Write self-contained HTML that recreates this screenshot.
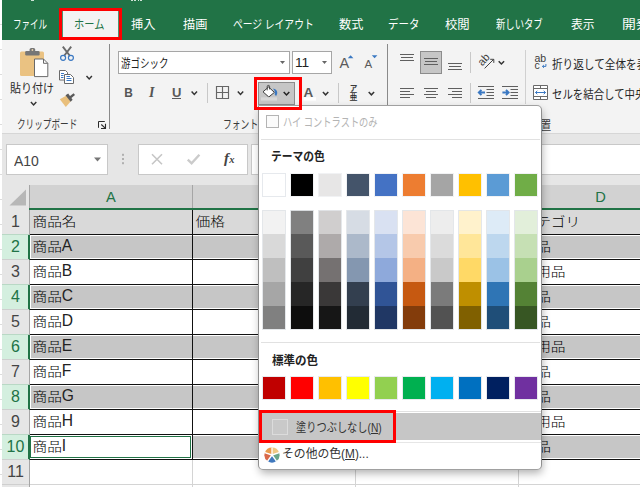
<!DOCTYPE html>
<html lang="ja"><head><meta charset="utf-8"><title>Excel</title>
<style>
html,body{margin:0;padding:0;}
body{width:640px;height:487px;overflow:hidden;position:relative;background:#fff;font-family:"Liberation Sans", "Noto Sans CJK JP", sans-serif;}
.a{position:absolute;}
.t{position:absolute;white-space:nowrap;line-height:20px;height:20px;transform-origin:0 50%;}
u{text-decoration:underline;text-underline-offset:1px;}
.gh{height:20px;line-height:20px;text-align:center;font-size:14.67px;color:#217346}.rh{left:2px;width:27px;height:24px;line-height:24px;text-align:center;font-size:16px;}.ct{height:24px;line-height:24px;font-size:14.67px;color:#000;white-space:nowrap;font-weight:300;margin-top:-0.7px}.k{display:inline-block;transform:translateY(1px) scaleY(.87);transform-origin:0 50%;}.l{font-size:15.6px;color:#222}
</style></head><body>
<div class="a" style="left:0px;top:24px;width:2px;height:1px;background:#dcdcdc;"></div>
<div class="a" style="left:0px;top:49px;width:2px;height:1px;background:#dcdcdc;"></div>
<div class="a" style="left:0px;top:74px;width:2px;height:1px;background:#dcdcdc;"></div>
<div class="a" style="left:0px;top:99px;width:2px;height:1px;background:#dcdcdc;"></div>
<div class="a" style="left:0px;top:124px;width:2px;height:1px;background:#dcdcdc;"></div>
<div class="a" style="left:0px;top:149px;width:2px;height:1px;background:#dcdcdc;"></div>
<div class="a" style="left:0px;top:174px;width:2px;height:1px;background:#dcdcdc;"></div>
<div class="a" style="left:0px;top:199px;width:2px;height:1px;background:#dcdcdc;"></div>
<div class="a" style="left:0px;top:224px;width:2px;height:1px;background:#dcdcdc;"></div>
<div class="a" style="left:0px;top:249px;width:2px;height:1px;background:#dcdcdc;"></div>
<div class="a" style="left:0px;top:274px;width:2px;height:1px;background:#dcdcdc;"></div>
<div class="a" style="left:0px;top:299px;width:2px;height:1px;background:#dcdcdc;"></div>
<div class="a" style="left:0px;top:324px;width:2px;height:1px;background:#dcdcdc;"></div>
<div class="a" style="left:0px;top:349px;width:2px;height:1px;background:#dcdcdc;"></div>
<div class="a" style="left:0px;top:374px;width:2px;height:1px;background:#dcdcdc;"></div>
<div class="a" style="left:0px;top:399px;width:2px;height:1px;background:#dcdcdc;"></div>
<div class="a" style="left:0px;top:424px;width:2px;height:1px;background:#dcdcdc;"></div>
<div class="a" style="left:0px;top:449px;width:2px;height:1px;background:#dcdcdc;"></div>
<div class="a" style="left:0px;top:474px;width:2px;height:1px;background:#dcdcdc;"></div>
<div class="a" style="left:2px;top:0px;width:638px;height:40px;background:#217346;"></div>
<div class="a" style="left:31px;top:0px;width:3px;height:1px;background:#cfe3d7;"></div>
<div class="a" style="left:131px;top:0px;width:2px;height:1px;background:#cfe3d7;"></div>
<div class="a" style="left:134px;top:0px;width:2px;height:1px;background:#cfe3d7;"></div>
<div class="a" style="left:138px;top:0px;width:1px;height:1px;background:#cfe3d7;"></div>
<div class="a" style="left:140px;top:0px;width:2px;height:1px;background:#cfe3d7;"></div>
<div class="a" style="left:2px;top:40px;width:638px;height:93px;background:#f3f3f3;"></div>
<div class="a" style="left:2px;top:133px;width:638px;height:52px;background:#e6e6e6;"></div>
<div class="a" style="left:2px;top:133px;width:638px;height:1px;background:#d6d6d6;"></div>
<div class="a" style="left:59px;top:8px;width:57px;height:26px;background:#f3f3f3;border:3px solid #f00;"></div>
<div class="a" style="left:62px;top:11px;width:1px;height:26px;background:#4f9470;"></div>
<div class="a" style="left:118px;top:11px;width:1px;height:26px;background:#4f9470;"></div>
<svg class="a" style="left:0;top:0" width="640" height="140" viewBox="0 0 640 140" font-family="Liberation Sans, sans-serif"><rect x="109" y="44" width="1" height="85" fill="#8a8a8a"/><rect x="387" y="44" width="1" height="85" fill="#8a8a8a"/><rect x="525" y="50" width="1" height="54" fill="#d0d0d0"/><rect x="207" y="83" width="1" height="20" fill="#c8c8c8"/><rect x="338" y="83" width="1" height="20" fill="#c8c8c8"/><rect x="470" y="52" width="1" height="21" fill="#c8c8c8"/><rect x="470" y="83" width="1" height="20" fill="#c8c8c8"/><rect x="20" y="51.5" width="24" height="24.5" rx="1.5" fill="#eac282"/><rect x="25.2" y="51" width="14.4" height="4.4" rx="1.2" fill="#767676"/><path d="M29.6 52 V49.6 a1.6 1.6 0 0 1 1.6 -1.6 h2.4 a1.6 1.6 0 0 1 1.6 1.6 V52 Z" fill="#767676"/><circle cx="32.4" cy="50" r="0.9" fill="#e8d2ad"/><path d="M34.5 59 H43.5 L47.8 63.3 V76.6 H34.5 Z" fill="#fff" stroke="#6a6a6a" stroke-width="1"/><path d="M43.5 59 V63.3 H47.8" fill="none" stroke="#6a6a6a" stroke-width="1"/><path d="M30.9 102.1 L33.6 104.9 L36.3 102.1" fill="none" stroke="#333" stroke-width="1.5"/><path d="M62.8 46.6 L70 56 M71.2 46.6 L64 56" stroke="#6a6a6a" stroke-width="1.9" fill="none"/><circle cx="63.1" cy="57.8" r="2.5" fill="none" stroke="#3a78c2" stroke-width="1.2"/><circle cx="70.9" cy="57.8" r="2.5" fill="none" stroke="#3a78c2" stroke-width="1.2"/><path d="M59.5 70.5 H65.5 L67.5 72.5 V80 H59.5 Z" fill="#fff" stroke="#6a6a6a" stroke-width="1"/><path d="M64.5 74.5 H70.5 L73.5 77.5 V83.5 H64.5 Z" fill="#fff" stroke="#6a6a6a" stroke-width="1"/><rect x="61" y="73" width="3" height="1" fill="#3a78c2"/><rect x="61" y="75" width="2.5" height="1" fill="#3a78c2"/><rect x="61" y="77" width="2.5" height="1" fill="#3a78c2"/><rect x="66.5" y="78" width="5" height="1" fill="#3a78c2"/><rect x="66.5" y="80" width="5" height="1" fill="#3a78c2"/><rect x="66.5" y="76" width="3.5" height="1" fill="#3a78c2"/><path d="M86.5 76.1 L89.2 78.9 L91.9 76.1" fill="none" stroke="#333" stroke-width="1.5"/><path d="M59.8 99.2 L66.5 95.6 L70.6 101.6 L65.8 107 Z" fill="#e9bf7b"/><path d="M65.5 95.2 L68.2 93.6 L72.6 99.8 L70.6 101.8 Z" fill="#5a5a5a"/><path d="M69.4 96.4 L73.6 93.2 L75 95 L70.8 98.4 Z" fill="#5a5a5a"/><path d="M98.5 127.8 V121.5 H104.8" fill="none" stroke="#2b2b2b" stroke-width="1"/><path d="M101.3 124.5 L105.2 128.2 M105.5 123.8 V128.5 H101" fill="none" stroke="#2b2b2b" stroke-width="1.1"/><rect x="118.5" y="51.5" width="171" height="22" fill="#fff" stroke="#a6a6a6"/><rect x="292.5" y="51.5" width="39" height="22" fill="#fff" stroke="#a6a6a6"/><path d="M280 61 h5 l-2.5 3 z" fill="#666"/><path d="M322 61 h5 l-2.5 3 z" fill="#666"/><text x="339.6" y="67.8" font-size="14.5" fill="#5a5a5a">A</text><path d="M347.8 58.3 h5.6 l-2.8 -3 z" fill="#3a78c2"/><text x="364.6" y="67.8" font-size="11.5" fill="#5a5a5a">A</text><path d="M371.8 55.3 h5.6 l-2.8 3 z" fill="#3a78c2"/><text transform="translate(124.2,97) scale(.88,1)" font-size="13.5" font-weight="bold" fill="#555">B</text><text x="149" y="97" font-size="14" font-style="italic" font-family="Liberation Serif, serif" font-weight="bold" fill="#555">I</text><text x="172" y="96.6" font-size="13" fill="#5a5a5a" font-weight="bold">U</text><rect x="172" y="98" width="9" height="1" fill="#5a5a5a"/><path d="M191.6 91.6 L194.3 94.4 L197 91.6" fill="none" stroke="#333" stroke-width="1.5"/><path d="M216.5 86.5 h12 v12 h-12 z M222.5 86.5 v12 M216.5 92.5 h12" fill="none" stroke="#666" stroke-width="1.15"/><path d="M237.8 91.6 L240.5 94.4 L243.2 91.6" fill="none" stroke="#333" stroke-width="1.5"/><rect x="258.5" y="82.5" width="36" height="22" fill="#c6c6c6" stroke="#8c8c8c"/><path d="M268.6 87 L274.4 92.4 L268.8 97 L263 91.8 Z" fill="#fff" stroke="#3b3b3b" stroke-width="1"/><path d="M267.2 90.4 V86.6 a1.2 1.2 0 0 1 2.4 0 V89.4" fill="none" stroke="#3b3b3b" stroke-width="0.9"/><path d="M272.8 88.8 C275.6 88.8 277.6 90.8 277.2 93.4 L276.4 95.8 C275.2 95.8 274.6 95 274.8 93.8 C275.2 92 274.6 90.2 272.8 88.8 Z" fill="#3a78c2"/><rect x="261" y="97.3" width="16" height="3.3" fill="#d8d8d8"/><path d="M283.7 92.05 L286.5 94.95 L289.3 92.05" fill="none" stroke="#222" stroke-width="1.5"/><text x="303.4" y="96.6" font-size="13.5" font-weight="bold" fill="#5a5a5a">A</text><rect x="303.5" y="97.3" width="12.5" height="3.3" fill="#fff"/><path d="M322.9 92 L325.6 94.8 L328.3 92" fill="none" stroke="#333" stroke-width="1.5"/><text x="349.8" y="90.7" font-size="7.6" fill="#3b3b3b" font-family="Liberation Sans, Noto Sans CJK JP, sans-serif" font-weight="bold">ア</text><text transform="translate(349.6,100.4) scale(.88,1)" font-size="9" fill="#2b2b2b" font-family="Liberation Sans, Noto Sans CJK JP, sans-serif" font-weight="500">亜</text><path d="M368.7 92 L371.4 94.8 L374.1 92" fill="none" stroke="#333" stroke-width="1.5"/><rect x="400" y="54" width="14" height="1" fill="#5f5f5f"/><rect x="401" y="57" width="12" height="1" fill="#5f5f5f"/><rect x="400" y="60" width="14" height="1" fill="#5f5f5f"/><rect x="420.5" y="51.5" width="21" height="22" fill="#c6c6c6" stroke="#8c8c8c"/><rect x="424" y="58" width="14" height="1" fill="#5f5f5f"/><rect x="425" y="61" width="12" height="1" fill="#5f5f5f"/><rect x="424" y="64" width="14" height="1" fill="#5f5f5f"/><rect x="448" y="63" width="14" height="1" fill="#5f5f5f"/><rect x="449" y="66" width="12" height="1" fill="#5f5f5f"/><rect x="448" y="69" width="14" height="1" fill="#5f5f5f"/><rect x="400" y="88" width="14" height="1" fill="#5f5f5f"/><rect x="424" y="88" width="14" height="1" fill="#5f5f5f"/><rect x="448" y="88" width="14" height="1" fill="#5f5f5f"/><rect x="400" y="91" width="10" height="1" fill="#5f5f5f"/><rect x="426" y="91" width="10" height="1" fill="#5f5f5f"/><rect x="452" y="91" width="10" height="1" fill="#5f5f5f"/><rect x="400" y="94" width="14" height="1" fill="#5f5f5f"/><rect x="424" y="94" width="14" height="1" fill="#5f5f5f"/><rect x="448" y="94" width="14" height="1" fill="#5f5f5f"/><rect x="400" y="97" width="10" height="1" fill="#5f5f5f"/><rect x="426" y="97" width="10" height="1" fill="#5f5f5f"/><rect x="452" y="97" width="10" height="1" fill="#5f5f5f"/><text transform="translate(482.2,66.4) rotate(-47)" font-size="11" fill="#3b3b3b">ab</text><path d="M484.6 68.4 L493.6 59.4 M490.2 59.3 H493.8 V62.9" fill="none" stroke="#444" stroke-width="1"/><path d="M498.7 61.2 L501.4 64 L504.1 61.2" fill="none" stroke="#333" stroke-width="1.5"/><rect x="478" y="86" width="16" height="1" fill="#5f5f5f"/><rect x="478" y="98" width="16" height="1" fill="#5f5f5f"/><rect x="486.5" y="89" width="7.5" height="1" fill="#5f5f5f"/><rect x="486.5" y="92" width="7.5" height="1" fill="#5f5f5f"/><rect x="486.5" y="95" width="7.5" height="1" fill="#5f5f5f"/><rect x="502" y="86" width="16" height="1" fill="#5f5f5f"/><rect x="502" y="98" width="16" height="1" fill="#5f5f5f"/><rect x="510.5" y="89" width="7.5" height="1" fill="#5f5f5f"/><rect x="510.5" y="92" width="7.5" height="1" fill="#5f5f5f"/><rect x="510.5" y="95" width="7.5" height="1" fill="#5f5f5f"/><path d="M479.4 92.5 H485 M481.4 89.9 L478.8 92.5 L481.4 95.1" fill="none" stroke="#3a78c2" stroke-width="1.9"/><path d="M502.4 92.5 H508 M506 89.9 L508.6 92.5 L506 95.1" fill="none" stroke="#3a78c2" stroke-width="1.9"/><text x="534.4" y="62" font-size="10.5" fill="#3b3b3b">ab</text><text x="534.4" y="69.4" font-size="10.5" fill="#3b3b3b">c</text><path d="M545.9 64 V66.4 H542.6 M543.9 65 L542.4 66.4 L543.9 67.8" fill="none" stroke="#3a78c2" stroke-width="1"/><path d="M533.5 85.5 h14 v14 h-14 z M533.5 88.5 h14 M533.5 96.5 h14 M540.5 85.5 v3 M540.5 96.5 v3" fill="#fff" stroke="#6a6a6a" stroke-width="1"/><path d="M535.5 92.5 H545.5 M537.3 90.8 L535.5 92.5 L537.3 94.2 M543.7 90.8 L545.5 92.5 L543.7 94.2" fill="none" stroke="#3a78c2" stroke-width="1"/></svg>
<div class="a" style="left:6px;top:144px;width:102px;height:31px;background:#fff;border:1px solid #c8c8c8;box-sizing:border-box;"></div>
<div class="a" style="left:138px;top:144px;width:110px;height:31px;background:#fff;border:1px solid #c8c8c8;box-sizing:border-box;"></div>
<div class="a" style="left:251px;top:144px;width:395px;height:31px;background:#fff;border:1px solid #c8c8c8;box-sizing:border-box;"></div>
<svg class="a" style="left:0;top:140px" width="260" height="40" viewBox="0 140 260 40"><path d="M94 157.5 h7 l-3.5 4 z" fill="#777"/><rect x="122" y="153.8" width="2" height="2" fill="#b0b0b0"/><rect x="122" y="158" width="2" height="2" fill="#b0b0b0"/><rect x="122" y="162.2" width="2" height="2" fill="#b0b0b0"/><path d="M152 154.2 L162 164.2 M162 154.2 L152 164.2" stroke="#c6c6c6" stroke-width="1.6" fill="none"/><path d="M187.8 159.6 L191.6 163.3 L199.4 154.8" stroke="#cbcbcb" stroke-width="2.4" fill="none"/><text x="224" y="162.6" font-family="Liberation Serif, serif" font-style="italic" font-size="15" fill="#444" font-weight="bold">f</text><text x="229.2" y="163.4" font-family="Liberation Serif, serif" font-style="italic" font-size="10.5" fill="#444" font-weight="bold">x</text></svg>
<div class="a" style="left:30px;top:185px;width:610px;height:23px;background:#d2d2d2;"></div>
<div class="a" style="left:192px;top:185px;width:1px;height:23px;background:#a6a6a6;"></div>
<div class="a" style="left:355px;top:185px;width:1px;height:23px;background:#a6a6a6;"></div>
<div class="a" style="left:518px;top:185px;width:1px;height:23px;background:#a6a6a6;"></div>
<div class="a" style="left:2px;top:185px;width:27px;height:25px;background:#e6e6e6;"></div>
<svg class="a" style="left:2px;top:185px" width="28" height="24"><path d="M24 4.5 V20.5 H7.5 Z" fill="#b7b7b7"/></svg>
<div class="a" style="left:29px;top:185px;width:1px;height:23px;background:#a6a6a6;"></div>
<div class="a" style="left:29px;top:208px;width:611px;height:2px;background:#217346;"></div>
<div class="a gh" style="left:91px;top:187px;width:40px;">A</div>
<div class="a gh" style="left:254px;top:187px;width:40px;">B</div>
<div class="a gh" style="left:417px;top:187px;width:40px;">C</div>
<div class="a gh" style="left:580.5px;top:187px;width:40px;">D</div>
<div class="a" style="left:2px;top:210px;width:27px;height:25px;background:#e6e6e6;"></div>
<div class="a" style="left:29px;top:210px;width:1px;height:25px;background:#a6a6a6;"></div>
<div class="a rh" style="top:210px;color:#444">1</div>
<div class="a" style="left:30px;top:210px;width:162px;height:24px;background:#d9d9d9;"></div>
<div class="a ct" style="left:32.5px;top:210px;"><span class="k">商品名</span></div>
<div class="a" style="left:193px;top:210px;width:162px;height:24px;background:#d9d9d9;"></div>
<div class="a ct" style="left:195.5px;top:210px;"><span class="k">価格</span></div>
<div class="a" style="left:356px;top:210px;width:162px;height:24px;background:#d9d9d9;"></div>
<div class="a" style="left:519px;top:210px;width:162px;height:24px;background:#d9d9d9;"></div>
<div class="a ct" style="left:521.5px;top:210px;"><span class="k">カテゴリ</span></div>
<div class="a" style="left:30px;top:234px;width:610px;height:1px;background:#111;"></div>
<div class="a" style="left:2px;top:235px;width:27px;height:25px;background:#d4efdf;"></div>
<div class="a" style="left:28px;top:235px;width:2px;height:25px;background:#217346;"></div>
<div class="a" style="left:2px;top:234px;width:27px;height:1px;background:#b9d8c5;"></div>
<div class="a rh" style="top:235px;color:#217346">2</div>
<div class="a" style="left:30px;top:235px;width:162px;height:24px;background:#fff;"></div>
<div class="a" style="left:31px;top:236px;width:161px;height:22px;background:#c6c6c6;"></div>
<div class="a ct" style="left:32.5px;top:235px;"><span class="k">商品</span><span class="l">A</span></div>
<div class="a" style="left:193px;top:235px;width:162px;height:24px;background:#fff;"></div>
<div class="a" style="left:193px;top:236px;width:162px;height:22px;background:#c6c6c6;"></div>
<div class="a" style="left:356px;top:235px;width:162px;height:24px;background:#fff;"></div>
<div class="a" style="left:356px;top:236px;width:162px;height:22px;background:#c6c6c6;"></div>
<div class="a" style="left:519px;top:235px;width:162px;height:24px;background:#fff;"></div>
<div class="a" style="left:519px;top:236px;width:162px;height:22px;background:#c6c6c6;"></div>
<div class="a ct" style="left:521.5px;top:235px;"><span class="k">食品</span></div>
<div class="a" style="left:30px;top:259px;width:610px;height:1px;background:#111;"></div>
<div class="a" style="left:2px;top:260px;width:27px;height:25px;background:#e6e6e6;"></div>
<div class="a" style="left:29px;top:260px;width:1px;height:25px;background:#a6a6a6;"></div>
<div class="a" style="left:2px;top:259px;width:27px;height:1px;background:#cfcfcf;"></div>
<div class="a rh" style="top:260px;color:#444">3</div>
<div class="a" style="left:30px;top:260px;width:162px;height:24px;background:#fff;"></div>
<div class="a ct" style="left:32.5px;top:260px;"><span class="k">商品</span><span class="l">B</span></div>
<div class="a" style="left:193px;top:260px;width:162px;height:24px;background:#fff;"></div>
<div class="a" style="left:356px;top:260px;width:162px;height:24px;background:#fff;"></div>
<div class="a" style="left:519px;top:260px;width:162px;height:24px;background:#fff;"></div>
<div class="a ct" style="left:521.5px;top:260px;"><span class="k">日用品</span></div>
<div class="a" style="left:30px;top:284px;width:610px;height:1px;background:#111;"></div>
<div class="a" style="left:2px;top:285px;width:27px;height:25px;background:#d4efdf;"></div>
<div class="a" style="left:28px;top:285px;width:2px;height:25px;background:#217346;"></div>
<div class="a" style="left:2px;top:284px;width:27px;height:1px;background:#b9d8c5;"></div>
<div class="a rh" style="top:285px;color:#217346">4</div>
<div class="a" style="left:30px;top:285px;width:162px;height:24px;background:#fff;"></div>
<div class="a" style="left:31px;top:286px;width:161px;height:22px;background:#c6c6c6;"></div>
<div class="a ct" style="left:32.5px;top:285px;"><span class="k">商品</span><span class="l">C</span></div>
<div class="a" style="left:193px;top:285px;width:162px;height:24px;background:#fff;"></div>
<div class="a" style="left:193px;top:286px;width:162px;height:22px;background:#c6c6c6;"></div>
<div class="a" style="left:356px;top:285px;width:162px;height:24px;background:#fff;"></div>
<div class="a" style="left:356px;top:286px;width:162px;height:22px;background:#c6c6c6;"></div>
<div class="a" style="left:519px;top:285px;width:162px;height:24px;background:#fff;"></div>
<div class="a" style="left:519px;top:286px;width:162px;height:22px;background:#c6c6c6;"></div>
<div class="a ct" style="left:521.5px;top:285px;"><span class="k">食品</span></div>
<div class="a" style="left:30px;top:309px;width:610px;height:1px;background:#111;"></div>
<div class="a" style="left:2px;top:310px;width:27px;height:25px;background:#e6e6e6;"></div>
<div class="a" style="left:29px;top:310px;width:1px;height:25px;background:#a6a6a6;"></div>
<div class="a" style="left:2px;top:309px;width:27px;height:1px;background:#cfcfcf;"></div>
<div class="a rh" style="top:310px;color:#444">5</div>
<div class="a" style="left:30px;top:310px;width:162px;height:24px;background:#fff;"></div>
<div class="a ct" style="left:32.5px;top:310px;"><span class="k">商品</span><span class="l">D</span></div>
<div class="a" style="left:193px;top:310px;width:162px;height:24px;background:#fff;"></div>
<div class="a" style="left:356px;top:310px;width:162px;height:24px;background:#fff;"></div>
<div class="a" style="left:519px;top:310px;width:162px;height:24px;background:#fff;"></div>
<div class="a ct" style="left:521.5px;top:310px;"><span class="k">食品</span></div>
<div class="a" style="left:30px;top:334px;width:610px;height:1px;background:#111;"></div>
<div class="a" style="left:2px;top:335px;width:27px;height:25px;background:#d4efdf;"></div>
<div class="a" style="left:28px;top:335px;width:2px;height:25px;background:#217346;"></div>
<div class="a" style="left:2px;top:334px;width:27px;height:1px;background:#b9d8c5;"></div>
<div class="a rh" style="top:335px;color:#217346">6</div>
<div class="a" style="left:30px;top:335px;width:162px;height:24px;background:#fff;"></div>
<div class="a" style="left:31px;top:336px;width:161px;height:22px;background:#c6c6c6;"></div>
<div class="a ct" style="left:32.5px;top:335px;"><span class="k">商品</span><span class="l">E</span></div>
<div class="a" style="left:193px;top:335px;width:162px;height:24px;background:#fff;"></div>
<div class="a" style="left:193px;top:336px;width:162px;height:22px;background:#c6c6c6;"></div>
<div class="a" style="left:356px;top:335px;width:162px;height:24px;background:#fff;"></div>
<div class="a" style="left:356px;top:336px;width:162px;height:22px;background:#c6c6c6;"></div>
<div class="a" style="left:519px;top:335px;width:162px;height:24px;background:#fff;"></div>
<div class="a" style="left:519px;top:336px;width:162px;height:22px;background:#c6c6c6;"></div>
<div class="a ct" style="left:521.5px;top:335px;"><span class="k">日用品</span></div>
<div class="a" style="left:30px;top:359px;width:610px;height:1px;background:#111;"></div>
<div class="a" style="left:2px;top:360px;width:27px;height:25px;background:#e6e6e6;"></div>
<div class="a" style="left:29px;top:360px;width:1px;height:25px;background:#a6a6a6;"></div>
<div class="a" style="left:2px;top:359px;width:27px;height:1px;background:#cfcfcf;"></div>
<div class="a rh" style="top:360px;color:#444">7</div>
<div class="a" style="left:30px;top:360px;width:162px;height:24px;background:#fff;"></div>
<div class="a ct" style="left:32.5px;top:360px;"><span class="k">商品</span><span class="l">F</span></div>
<div class="a" style="left:193px;top:360px;width:162px;height:24px;background:#fff;"></div>
<div class="a" style="left:356px;top:360px;width:162px;height:24px;background:#fff;"></div>
<div class="a" style="left:519px;top:360px;width:162px;height:24px;background:#fff;"></div>
<div class="a ct" style="left:521.5px;top:360px;"><span class="k">食品</span></div>
<div class="a" style="left:30px;top:384px;width:610px;height:1px;background:#111;"></div>
<div class="a" style="left:2px;top:385px;width:27px;height:25px;background:#d4efdf;"></div>
<div class="a" style="left:28px;top:385px;width:2px;height:25px;background:#217346;"></div>
<div class="a" style="left:2px;top:384px;width:27px;height:1px;background:#b9d8c5;"></div>
<div class="a rh" style="top:385px;color:#217346">8</div>
<div class="a" style="left:30px;top:385px;width:162px;height:24px;background:#fff;"></div>
<div class="a" style="left:31px;top:386px;width:161px;height:22px;background:#c6c6c6;"></div>
<div class="a ct" style="left:32.5px;top:385px;"><span class="k">商品</span><span class="l">G</span></div>
<div class="a" style="left:193px;top:385px;width:162px;height:24px;background:#fff;"></div>
<div class="a" style="left:193px;top:386px;width:162px;height:22px;background:#c6c6c6;"></div>
<div class="a" style="left:356px;top:385px;width:162px;height:24px;background:#fff;"></div>
<div class="a" style="left:356px;top:386px;width:162px;height:22px;background:#c6c6c6;"></div>
<div class="a" style="left:519px;top:385px;width:162px;height:24px;background:#fff;"></div>
<div class="a" style="left:519px;top:386px;width:162px;height:22px;background:#c6c6c6;"></div>
<div class="a ct" style="left:521.5px;top:385px;"><span class="k">食品</span></div>
<div class="a" style="left:30px;top:409px;width:610px;height:1px;background:#111;"></div>
<div class="a" style="left:2px;top:410px;width:27px;height:25px;background:#e6e6e6;"></div>
<div class="a" style="left:29px;top:410px;width:1px;height:25px;background:#a6a6a6;"></div>
<div class="a" style="left:2px;top:409px;width:27px;height:1px;background:#cfcfcf;"></div>
<div class="a rh" style="top:410px;color:#444">9</div>
<div class="a" style="left:30px;top:410px;width:162px;height:24px;background:#fff;"></div>
<div class="a ct" style="left:32.5px;top:410px;"><span class="k">商品</span><span class="l">H</span></div>
<div class="a" style="left:193px;top:410px;width:162px;height:24px;background:#fff;"></div>
<div class="a" style="left:356px;top:410px;width:162px;height:24px;background:#fff;"></div>
<div class="a" style="left:519px;top:410px;width:162px;height:24px;background:#fff;"></div>
<div class="a ct" style="left:521.5px;top:410px;"><span class="k">日用品</span></div>
<div class="a" style="left:30px;top:434px;width:610px;height:1px;background:#111;"></div>
<div class="a" style="left:2px;top:435px;width:27px;height:25px;background:#d4efdf;"></div>
<div class="a" style="left:28px;top:435px;width:2px;height:25px;background:#217346;"></div>
<div class="a" style="left:2px;top:434px;width:27px;height:1px;background:#b9d8c5;"></div>
<div class="a rh" style="top:435px;color:#217346">10</div>
<div class="a" style="left:30px;top:435px;width:162px;height:24px;background:#fff;"></div>
<div class="a" style="left:31px;top:436px;width:161px;height:22px;background:#c6c6c6;"></div>
<div class="a ct" style="left:32.5px;top:435px;"><span class="k">商品</span><span class="l">I</span></div>
<div class="a" style="left:193px;top:435px;width:162px;height:24px;background:#fff;"></div>
<div class="a" style="left:193px;top:436px;width:162px;height:22px;background:#c6c6c6;"></div>
<div class="a" style="left:356px;top:435px;width:162px;height:24px;background:#fff;"></div>
<div class="a" style="left:356px;top:436px;width:162px;height:22px;background:#c6c6c6;"></div>
<div class="a" style="left:519px;top:435px;width:162px;height:24px;background:#fff;"></div>
<div class="a" style="left:519px;top:436px;width:162px;height:22px;background:#c6c6c6;"></div>
<div class="a ct" style="left:521.5px;top:435px;"><span class="k">食品</span></div>
<div class="a" style="left:30px;top:459px;width:610px;height:1px;background:#111;"></div>
<div class="a" style="left:192px;top:210px;width:1px;height:250px;background:#111;"></div>
<div class="a" style="left:355px;top:210px;width:1px;height:250px;background:#111;"></div>
<div class="a" style="left:518px;top:210px;width:1px;height:250px;background:#111;"></div>
<div class="a" style="left:30px;top:435px;width:162px;height:24px;background:#fff;"></div>
<div class="a" style="left:30px;top:436px;width:159px;height:20px;background:#fff;border:1px solid #217346;"></div>
<div class="a ct" style="left:32.5px;top:435px;"><span class="k">商品</span><span class="l">I</span></div>
<div class="a" style="left:2px;top:460px;width:27px;height:27px;background:#e6e6e6;"></div>
<div class="a" style="left:29px;top:460px;width:1px;height:27px;background:#a6a6a6;"></div>
<div class="a" style="left:2px;top:459px;width:27px;height:1px;background:#cfcfcf;"></div>
<div class="a" style="left:2px;top:484px;width:27px;height:1px;background:#cfcfcf;"></div>
<div class="a rh" style="top:460px;color:#444">11</div>
<div class="a" style="left:30px;top:484px;width:610px;height:1px;background:#d4d4d4;"></div>
<div class="a" style="left:192px;top:460px;width:1px;height:27px;background:#d4d4d4;"></div>
<div class="a" style="left:355px;top:460px;width:1px;height:27px;background:#d4d4d4;"></div>
<div class="a" style="left:518px;top:460px;width:1px;height:27px;background:#d4d4d4;"></div>
<span class="t" style="left:223.3px;top:114.7px;font-size:12px;color:#3b3b3b;transform:scaleX(0.733);">フォント</span>
<span class="t" style="left:528.6px;top:115.5px;font-size:12px;color:#3b3b3b;transform:scaleX(0.926);">配置</span>
<div class="a" style="left:258px;top:105px;width:282px;height:363px;background:#fff;border:1px solid #a0a0a0;border-left-color:#8f8f8f;border-right-color:#8f8f8f;border-bottom-color:#a0a0a0;border-radius:0 5px 5px 5px;box-shadow:1px 4px 8px -1px rgba(0,0,0,.32);"></div>
<div class="a" style="left:266px;top:115px;width:11px;height:11px;background:#fbfbfb;border:1px solid #b4b4b4;"></div>
<div class="a" style="left:261px;top:139px;width:279px;height:1px;background:#e1e1e1;"></div>
<div class="a" style="left:261px;top:342px;width:279px;height:1px;background:#e1e1e1;"></div>
<div class="a" style="left:259px;top:411px;width:282px;height:1px;background:#e1e1e1;"></div>
<div class="a" style="left:259px;top:442px;width:282px;height:1px;background:#e6e6e6;"></div>
<div class="a" style="left:263px;top:174px;width:22px;height:22px;background:#FFFFFF;outline:1px solid #e6e9ed;"></div>
<div class="a" style="left:263px;top:210px;width:22px;height:24px;background:#F2F2F2;"></div>
<div class="a" style="left:263px;top:234px;width:22px;height:24px;background:#D9D9D9;"></div>
<div class="a" style="left:263px;top:258px;width:22px;height:24px;background:#BFBFBF;"></div>
<div class="a" style="left:263px;top:282px;width:22px;height:24px;background:#A6A6A6;"></div>
<div class="a" style="left:263px;top:306px;width:22px;height:23px;background:#808080;"></div>
<div class="a" style="left:262px;top:209.5px;width:24px;height:120px;background:transparent;border:0;outline:1px solid rgba(225,228,232,.9);outline-offset:-1px;"></div>
<div class="a" style="left:291px;top:174px;width:22px;height:22px;background:#000000;outline:1px solid #f1f2f4;"></div>
<div class="a" style="left:291px;top:210px;width:22px;height:24px;background:#808080;"></div>
<div class="a" style="left:291px;top:234px;width:22px;height:24px;background:#595959;"></div>
<div class="a" style="left:291px;top:258px;width:22px;height:24px;background:#404040;"></div>
<div class="a" style="left:291px;top:282px;width:22px;height:24px;background:#262626;"></div>
<div class="a" style="left:291px;top:306px;width:22px;height:23px;background:#0D0D0D;"></div>
<div class="a" style="left:290px;top:209.5px;width:24px;height:120px;background:transparent;border:0;outline:1px solid rgba(225,228,232,.9);outline-offset:-1px;"></div>
<div class="a" style="left:319px;top:174px;width:22px;height:22px;background:#E7E6E6;outline:1px solid #f1f2f4;"></div>
<div class="a" style="left:319px;top:210px;width:22px;height:24px;background:#D0CECE;"></div>
<div class="a" style="left:319px;top:234px;width:22px;height:24px;background:#AEAAAA;"></div>
<div class="a" style="left:319px;top:258px;width:22px;height:24px;background:#757171;"></div>
<div class="a" style="left:319px;top:282px;width:22px;height:24px;background:#3A3838;"></div>
<div class="a" style="left:319px;top:306px;width:22px;height:23px;background:#161616;"></div>
<div class="a" style="left:318px;top:209.5px;width:24px;height:120px;background:transparent;border:0;outline:1px solid rgba(225,228,232,.9);outline-offset:-1px;"></div>
<div class="a" style="left:347px;top:174px;width:22px;height:22px;background:#44546A;outline:1px solid #f1f2f4;"></div>
<div class="a" style="left:347px;top:210px;width:22px;height:24px;background:#D6DCE4;"></div>
<div class="a" style="left:347px;top:234px;width:22px;height:24px;background:#ACB9CA;"></div>
<div class="a" style="left:347px;top:258px;width:22px;height:24px;background:#8497B0;"></div>
<div class="a" style="left:347px;top:282px;width:22px;height:24px;background:#333F4F;"></div>
<div class="a" style="left:347px;top:306px;width:22px;height:23px;background:#222B35;"></div>
<div class="a" style="left:346px;top:209.5px;width:24px;height:120px;background:transparent;border:0;outline:1px solid rgba(225,228,232,.9);outline-offset:-1px;"></div>
<div class="a" style="left:375px;top:174px;width:22px;height:22px;background:#4472C4;outline:1px solid #f1f2f4;"></div>
<div class="a" style="left:375px;top:210px;width:22px;height:24px;background:#D9E1F2;"></div>
<div class="a" style="left:375px;top:234px;width:22px;height:24px;background:#B4C6E7;"></div>
<div class="a" style="left:375px;top:258px;width:22px;height:24px;background:#8EA9DB;"></div>
<div class="a" style="left:375px;top:282px;width:22px;height:24px;background:#305496;"></div>
<div class="a" style="left:375px;top:306px;width:22px;height:23px;background:#203764;"></div>
<div class="a" style="left:374px;top:209.5px;width:24px;height:120px;background:transparent;border:0;outline:1px solid rgba(225,228,232,.9);outline-offset:-1px;"></div>
<div class="a" style="left:403px;top:174px;width:22px;height:22px;background:#ED7D31;outline:1px solid #f1f2f4;"></div>
<div class="a" style="left:403px;top:210px;width:22px;height:24px;background:#FCE4D6;"></div>
<div class="a" style="left:403px;top:234px;width:22px;height:24px;background:#F8CBAD;"></div>
<div class="a" style="left:403px;top:258px;width:22px;height:24px;background:#F4B084;"></div>
<div class="a" style="left:403px;top:282px;width:22px;height:24px;background:#C65911;"></div>
<div class="a" style="left:403px;top:306px;width:22px;height:23px;background:#833C0B;"></div>
<div class="a" style="left:402px;top:209.5px;width:24px;height:120px;background:transparent;border:0;outline:1px solid rgba(225,228,232,.9);outline-offset:-1px;"></div>
<div class="a" style="left:431px;top:174px;width:22px;height:22px;background:#A5A5A5;outline:1px solid #f1f2f4;"></div>
<div class="a" style="left:431px;top:210px;width:22px;height:24px;background:#EDEDED;"></div>
<div class="a" style="left:431px;top:234px;width:22px;height:24px;background:#DBDBDB;"></div>
<div class="a" style="left:431px;top:258px;width:22px;height:24px;background:#C9C9C9;"></div>
<div class="a" style="left:431px;top:282px;width:22px;height:24px;background:#7B7B7B;"></div>
<div class="a" style="left:431px;top:306px;width:22px;height:23px;background:#525252;"></div>
<div class="a" style="left:430px;top:209.5px;width:24px;height:120px;background:transparent;border:0;outline:1px solid rgba(225,228,232,.9);outline-offset:-1px;"></div>
<div class="a" style="left:459px;top:174px;width:22px;height:22px;background:#FFC000;outline:1px solid #f1f2f4;"></div>
<div class="a" style="left:459px;top:210px;width:22px;height:24px;background:#FFF2CC;"></div>
<div class="a" style="left:459px;top:234px;width:22px;height:24px;background:#FFE699;"></div>
<div class="a" style="left:459px;top:258px;width:22px;height:24px;background:#FFD966;"></div>
<div class="a" style="left:459px;top:282px;width:22px;height:24px;background:#BF8F00;"></div>
<div class="a" style="left:459px;top:306px;width:22px;height:23px;background:#806000;"></div>
<div class="a" style="left:458px;top:209.5px;width:24px;height:120px;background:transparent;border:0;outline:1px solid rgba(225,228,232,.9);outline-offset:-1px;"></div>
<div class="a" style="left:487px;top:174px;width:22px;height:22px;background:#5B9BD5;outline:1px solid #f1f2f4;"></div>
<div class="a" style="left:487px;top:210px;width:22px;height:24px;background:#DDEBF7;"></div>
<div class="a" style="left:487px;top:234px;width:22px;height:24px;background:#BDD7EE;"></div>
<div class="a" style="left:487px;top:258px;width:22px;height:24px;background:#9BC2E6;"></div>
<div class="a" style="left:487px;top:282px;width:22px;height:24px;background:#2F75B5;"></div>
<div class="a" style="left:487px;top:306px;width:22px;height:23px;background:#1F4E78;"></div>
<div class="a" style="left:486px;top:209.5px;width:24px;height:120px;background:transparent;border:0;outline:1px solid rgba(225,228,232,.9);outline-offset:-1px;"></div>
<div class="a" style="left:515px;top:174px;width:22px;height:22px;background:#70AD47;outline:1px solid #f1f2f4;"></div>
<div class="a" style="left:515px;top:210px;width:22px;height:24px;background:#E2EFDA;"></div>
<div class="a" style="left:515px;top:234px;width:22px;height:24px;background:#C6E0B4;"></div>
<div class="a" style="left:515px;top:258px;width:22px;height:24px;background:#A9D08E;"></div>
<div class="a" style="left:515px;top:282px;width:22px;height:24px;background:#548235;"></div>
<div class="a" style="left:515px;top:306px;width:22px;height:23px;background:#375623;"></div>
<div class="a" style="left:514px;top:209.5px;width:24px;height:120px;background:transparent;border:0;outline:1px solid rgba(225,228,232,.9);outline-offset:-1px;"></div>
<div class="a" style="left:263px;top:377px;width:22px;height:22px;background:#C00000;outline:1px solid #e8eaee;"></div>
<div class="a" style="left:291px;top:377px;width:22px;height:22px;background:#FF0000;outline:1px solid #e8eaee;"></div>
<div class="a" style="left:319px;top:377px;width:22px;height:22px;background:#FFC000;outline:1px solid #e8eaee;"></div>
<div class="a" style="left:347px;top:377px;width:22px;height:22px;background:#FFFF00;outline:1px solid #e8eaee;"></div>
<div class="a" style="left:375px;top:377px;width:22px;height:22px;background:#92D050;outline:1px solid #e8eaee;"></div>
<div class="a" style="left:403px;top:377px;width:22px;height:22px;background:#00B050;outline:1px solid #e8eaee;"></div>
<div class="a" style="left:431px;top:377px;width:22px;height:22px;background:#00B0F0;outline:1px solid #e8eaee;"></div>
<div class="a" style="left:459px;top:377px;width:22px;height:22px;background:#0070C0;outline:1px solid #e8eaee;"></div>
<div class="a" style="left:487px;top:377px;width:22px;height:22px;background:#002060;outline:1px solid #e8eaee;"></div>
<div class="a" style="left:515px;top:377px;width:22px;height:22px;background:#7030A0;outline:1px solid #e8eaee;"></div>
<div class="a" style="left:259px;top:413px;width:281.5px;height:27px;background:#c6c6c6;"></div>
<div class="a" style="left:272px;top:419px;width:14px;height:14px;background:#c9c9c9;border:1px solid #dcdcdc;"></div>
<div class="a" style="left:259px;top:410px;width:131px;height:27px;border:3px solid #f00;"></div>
<svg class="a" style="left:263.6px;top:447.4px" width="16" height="16" viewBox="0 0 17 17"><path d="M8.5 8.5 L8.5 0.5 A8 8 0 0 1 16.1 6 Z" fill="#efc883"/><path d="M8.5 8.5 L16.1 6 A8 8 0 0 1 13.2 15 Z" fill="#6aa589"/><path d="M8.5 8.5 L13.2 15 A8 8 0 0 1 3.8 15 Z" fill="#3f78bd"/><path d="M8.5 8.5 L3.8 15 A8 8 0 0 1 0.9 6 Z" fill="#d9694a"/><path d="M8.5 8.5 L0.9 6 A8 8 0 0 1 8.5 0.5 Z" fill="#ea9b4c"/><path d="M8.5 8.5 L8.5 0.5 M8.5 8.5 L16.1 6 M8.5 8.5 L13.2 15 M8.5 8.5 L3.8 15 M8.5 8.5 L0.9 6" stroke="#fff" stroke-width="1.4"/><circle cx="8.5" cy="8.5" r="1" fill="#fff"/></svg>
<div class="a" style="left:254px;top:77px;width:42px;height:26.5px;border:3px solid #f00;"></div>
<span class="t" style="left:13.3px;top:14.6px;font-size:12px;color:#fff;transform:scaleX(0.711);">ファイル</span>
<span class="t" style="left:131.4px;top:15.1px;font-size:12px;color:#fff;transform:scaleX(1.017);">挿入</span>
<span class="t" style="left:183.0px;top:15.1px;font-size:12px;color:#fff;transform:scaleX(1.017);">描画</span>
<span class="t" style="left:233.0px;top:15.1px;font-size:12px;color:#fff;transform:scaleX(0.814);">ページ レイアウト</span>
<span class="t" style="left:338.7px;top:15.1px;font-size:12px;color:#fff;transform:scaleX(1.013);">数式</span>
<span class="t" style="left:388.1px;top:15.1px;font-size:12px;color:#fff;transform:scaleX(0.871);">データ</span>
<span class="t" style="left:445.0px;top:15.1px;font-size:12px;color:#fff;transform:scaleX(1.026);">校閲</span>
<span class="t" style="left:495.9px;top:15.1px;font-size:12px;color:#fff;transform:scaleX(0.778);">新しいタブ</span>
<span class="t" style="left:571.0px;top:15.1px;font-size:12px;color:#fff;transform:scaleX(0.983);">表示</span>
<span class="t" style="left:621.6px;top:15.1px;font-size:12px;color:#fff;transform:scaleX(1.150);">開発</span>
<span class="t" style="left:74.1px;top:14.6px;font-size:12px;color:#217346;transform:scaleX(0.853);">ホーム</span>
<span class="t" style="left:9.8px;top:79.3px;font-size:12px;color:#2b2b2b;transform:scaleX(0.920);">貼り付け</span>
<span class="t" style="left:16.8px;top:115.2px;font-size:12px;color:#3b3b3b;transform:scaleX(0.718);">クリップボード</span>
<span class="t" style="left:120.7px;top:53.5px;font-size:12px;color:#222;transform:scaleX(0.793);">游ゴシック</span>
<span class="t" style="left:294.5px;top:53.0px;font-size:12px;color:#222;transform:scaleX(1.145);">11</span>
<span class="t" style="left:551.8px;top:54.7px;font-size:12px;color:#262626;transform:scaleX(0.885);">折り返して全体を表示する</span>
<span class="t" style="left:551.5px;top:85.3px;font-size:12px;color:#262626;transform:scaleX(0.868);">セルを結合して中央揃え</span>
<span class="t" style="left:283.2px;top:113.2px;font-size:12px;color:#b4b4b4;transform:scaleX(0.770);">ハイ コントラストのみ</span>
<span class="t" style="left:270.8px;top:147.3px;font-size:12px;color:#222;font-weight:bold;transform:scaleX(0.898);">テーマの色</span>
<span class="t" style="left:272.4px;top:350.8px;font-size:12px;color:#222;font-weight:bold;transform:scaleX(0.960);">標準の色</span>
<span class="t" style="left:296.2px;top:418.0px;font-size:12px;color:#333;transform:scaleX(0.850);">塗りつぶしなし(<u>N</u>)</span>
<span class="t" style="left:282.3px;top:444.2px;font-size:12px;color:#333;transform:scaleX(0.985);">その他の色(<u>M</u>)...</span>
<span class="t" style="left:13.8px;top:151.3px;font-size:14.67px;color:#444;transform:scaleX(0.954);">A10</span>
</body></html>
